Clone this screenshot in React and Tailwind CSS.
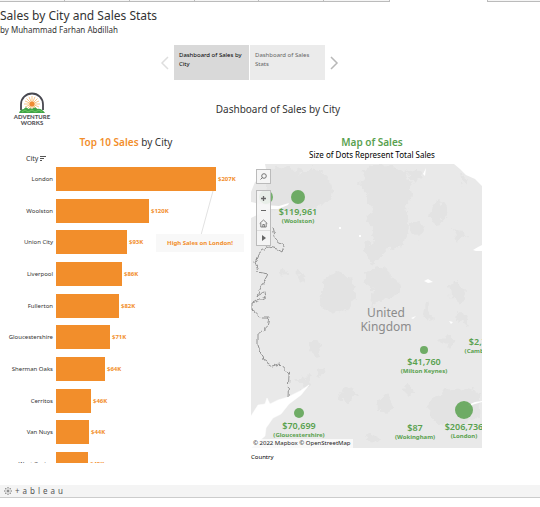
const cities = [
  { name: "London", sales: "$207K", width: 160 },
  { name: "Woolston", sales: "$120K", width: 93 },
  { name: "Union City", sales: "$93K", width: 71 },
  { name: "Liverpool", sales: "$86K", width: 66 },
  { name: "Fullerton", sales: "$82K", width: 63 },
  { name: "Gloucestershire", sales: "$71K", width: 54 },
  { name: "Sherman Oaks", sales: "$64K", width: 49 },
  { name: "Cerritos", sales: "$46K", width: 35 },
  { name: "Van Nuys", sales: "$44K", width: 33 },
  { name: "West Covina", sales: "$42K", width: 32 },
];

// x and y are the centre of the dot; labels hang below it
const pins = [
  { city: "Woolston", value: "$119,961", x: 47, y: 33, r: 7 },
  { city: "Milton Keynes", value: "$41,760", x: 173, y: 186, r: 4 },
  { city: "Cambridge", value: "$2,713", x: 232, y: 169, r: 1 },
  { city: "Gloucestershire", value: "$70,699", x: 48, y: 249, r: 5 },
  { city: "Wokingham", value: "$87", x: 164, y: 256, r: 0 },
  { city: "London", value: "$206,736", x: 213, y: 246, r: 9 },
];

function Logo() {
  return (
    <div className="flex w-[36px] flex-col items-center">
      <svg width="28" height="22" viewBox="0 0 28 22" aria-hidden="true">
        <path d="M3 18V12.500a11 11 0 0 1 22 0V18" fill="#fff" stroke="#484850" strokeWidth="1.800" />
        <g stroke="#f5b56a" strokeWidth=".8">
          <path d="M14 4v16M6 12h16M8.500 6.500l11 11M19.500 6.500l-11 11M11 4.800l6 14M17 4.800l-6 14M7 9l14 6M21 9L7 15" />
        </g>
        <circle cx="14" cy="12" r="2.500" fill="#f08a32" />
        <path d="M1 21c1-3 3-4 5-4 1-2 3-2 4 0 2-1 3-1 4 0 2-2 4-2 5 0 3-1 6 1 8 4z" fill="#3fa447" />
        <path d="M4 20l3-2 3 2 4-2 3 2 4-2 3 2" fill="none" stroke="#7bcf67" strokeWidth=".8" />
      </svg>
      <div className="text-center font-['Lato',sans-serif] text-[6px] leading-[6px] font-black text-[#55555a]">
        ADVENTURE
        <br />
        WORKS
      </div>
    </div>
  );
}

function StoryTabs() {
  return (
    <nav className="ml-[160px] flex h-[35px] items-center gap-px" aria-label="Story points">
      <button className="flex h-full w-[13px] items-center" aria-label="Previous">
        <svg width="9" height="14" viewBox="0 0 9 14" fill="none" stroke="#dedede" strokeWidth="1.500">
          <path d="M8 1L2 7l6 6" />
        </svg>
      </button>
      <button className="h-full w-[75px] bg-[#d9d9d9] px-[5px] pt-[6px] text-left text-[6px] leading-[9px] text-black">
        <span className="block h-full">Dashboard of Sales by City</span>
      </button>
      <button className="h-full w-[75px] bg-[#ebebeb] px-[5px] pt-[6px] text-left text-[6px] leading-[9px] text-[#666]">
        <span className="block h-full">Dashboard of Sales Stats</span>
      </button>
      <button className="flex h-full w-[13px] items-center justify-end" aria-label="Next">
        <svg width="9" height="14" viewBox="0 0 9 14" fill="none" stroke="#b8b8b8" strokeWidth="1.500">
          <path d="M1 1l6 6-6 6" />
        </svg>
      </button>
    </nav>
  );
}

function BarChart() {
  return (
    <section className="w-[236px] shrink-0">
      <h3 className="text-center text-[10px] leading-[15px] text-[#333]">
        <span className="font-semibold text-[#f28e2b]">Top 10 Sales</span> by City
      </h3>
      <div className="mt-[5px] flex h-[8px] items-center gap-[2px] pl-[18px] text-[7px] leading-[8px] text-[#333]">
        City
        <svg width="6" height="6" viewBox="0 0 6 6" stroke="#555" fill="none" aria-hidden="true">
          <path d="M0 .5h6M0 2.500h4M0 4.500h2" />
        </svg>
      </div>
      <div className="relative h-[300px] overflow-hidden">
        <ul className="grid h-[317px] grid-rows-10">
          {cities.map((c) => (
            <li key={c.name} className="flex items-center">
              <span className="flex w-[45px] shrink-0 justify-end text-[6px] leading-[8px] whitespace-nowrap text-[#333]">
                {c.name}
              </span>
              <span className="ml-[3px] h-[24px] shrink-0 bg-[#f28e2b]" style={{ width: c.width }} />
              <span className="ml-[2px] text-[6px] leading-[8px] font-bold text-[#f28e2b]">{c.sales}</span>
            </li>
          ))}
        </ul>
        <svg className="absolute top-[28px] left-[190px]" width="20" height="44" viewBox="0 0 20 44" aria-hidden="true">
          <path d="M15 0L3 44" stroke="#e2e2e2" />
        </svg>
        <div className="absolute top-[71px] left-[148px] flex h-[18px] w-[88px] items-center justify-center bg-[#f8f8f8] text-[6px] font-bold whitespace-nowrap text-[#f28e2b]">
          High Sales on London!
        </div>
      </div>
    </section>
  );
}

function MapArt() {
  return (
    <svg className="absolute inset-0" width="231" height="284" viewBox="0 0 231 284" aria-hidden="true">
      <defs>
        <filter id="rough" x="-5%" y="-5%" width="110%" height="110%">
          <feTurbulence type="fractalNoise" baseFrequency=".12" numOctaves="3" seed="4" />
          <feDisplacementMap in="SourceGraphic" scale="12" xChannelSelector="R" yChannelSelector="G" />
        </filter>
        <filter id="coast" x="-10%" y="-5%" width="120%" height="110%">
          <feTurbulence type="fractalNoise" baseFrequency=".2" numOctaves="2" seed="7" />
          <feDisplacementMap in="SourceGraphic" scale="5" xChannelSelector="R" yChannelSelector="G" />
        </filter>
      </defs>
      <rect width="231" height="284" fill="#e9e9e9" />
      <g fill="#e3e3e3" filter="url(#rough)">
        <path d="M16 8l12-6 24 6 10-4 14 6 6 12-4 14-14 8-8 2-12 5-14-7-14 4-2-16z" />
        <path d="M112 4l30-2 14 8 6 20-8 14 4 18-6 20-18 4-12 14-8-12 8-14-6-16 4-18-10-16z" />
        <path d="M72 117l14-8 14 6 6 14-8 18-14 3-14-6 2-14z" />
        <path d="M114 108l18-4 14 12 4 14-14 6-16 6 4-16-12-8z" />
        <path d="M180 42l10-6 6 12-4 10-10 2-4-8zM198 120l10-3 6 10-6 12-8-6zM200 65l12 2 4 6-10 4z" />
        <path d="M46 107l8 2 3 10-6 1-6-6zM30 102l5 2-2 8-4-4zM160 60l8-4 5 6-4 12-8-4z" />
        <path d="M60 180l7-4 4 9-6 9-6-5zM172 142l8-2-1 8 5 6-8 4-5-7zM207 148l10 5-2 8-9-4z" />
        <path d="M126 235l10-4 6 9-4 9-11-3zM88 226l14-3 6 8-10 6-9-3z" />
        <path d="M178 236l14-8 18-4 18 4 3 26-22 8-20-2-12-10z" />
        <path d="M112 79l12 2 4 7-10 5-8-6zM66 205l6-2 3 6-6 5zM190 176l6-6 9 6-6 9zM150 225l9-5 5 8-7 4z" />
        <path d="M115 273l10-4 4 7-8 4zM44 216l14-5 4 9-10 6zM155 8l10-4 6 8-8 8zM210 12l8 3-5 8z" />
      </g>
      <g fill="#fff">
        <path d="M0 0h14l1 5-4 9-7 4-4 10z" />
        <path d="M0 38l14 3 14 1 10-3-1 2-10 4-10 0-9 5-8 4z" />
        <path d="M203 0h28v22l-7-7-9-4-6-6z" />
        <path
          d="M0 252l7-11 7-1 2-6 3 6 8-4 10-3 12-6 9-6-8 10-12 9-8 10-8 4-7 10-1 8-7 6-7 6z"
          stroke="#fff"
          strokeWidth=".5"
        />
        <path d="M173 117l4-2 5 3-5 1zM222 86l5-3 4-2v6h-6zM160 154l5-2-3 3zM198 157l4 1-2 2zM108 71h2v2h-2zM172 10l3-6-1 8zM88 63h2v2h-2zM217 241l7-3 7-1v1l-7 2-6 2z" />
      </g>
      <path
        d="M22 64l3 12 8 6-2 6-5-3-9-2-7 4-3 4-3 7 3 10 10 2-6 11-5 11 8-4 1 6-14 5v6l10 9 7 0-2 9-9 7 0 11 5 15 9 6 8-2 9 10-1 23"
        fill="none"
        stroke="#888"
        strokeWidth=".9"
        filter="url(#coast)"
      />
    </svg>
  );
}

function MapToolbar() {
  return (
    <div className="absolute top-[5px] left-[5px] flex flex-col gap-[6px] text-[#666]">
      <button aria-label="Search" className="flex size-[15px] items-center justify-center border border-[#bbb] bg-[#f5f5f5]">
        <svg width="7" height="7" viewBox="0 0 7 7" fill="none" stroke="currentColor" strokeWidth=".9">
          <circle cx="4" cy="3" r="2.300" />
          <path d="M2.500 4.500L.5 6.500" />
        </svg>
      </button>
      <div className="flex w-[15px] flex-col border border-[#bbb] bg-[#f5f5f5]/90">
        <button aria-label="Zoom in" className="flex h-[14px] items-center justify-center">
          <svg width="7" height="7" viewBox="0 0 7 7" stroke="currentColor" strokeWidth="1.300">
            <path d="M1 3.500h5M3.500 1v5" />
          </svg>
        </button>
        <button aria-label="Zoom out" className="flex h-[11px] items-center justify-center">
          <svg width="7" height="3" viewBox="0 0 7 3" stroke="currentColor">
            <path d="M1 1.500h5" />
          </svg>
        </button>
        <button aria-label="Reset view" className="flex h-[14px] items-center justify-center">
          <svg width="9" height="9" viewBox="0 0 9 9" fill="none" stroke="currentColor" strokeWidth=".8">
            <path d="M.7 4.500L4.500 1l3.800 3.500M1.800 4v4h5.400V4M3.800 8V5.500h1.600V8" />
          </svg>
        </button>
        <button aria-label="Map tools" className="flex h-[15px] items-center justify-center border-t border-[#ddd]">
          <svg width="4" height="6" viewBox="0 0 4 6" fill="currentColor">
            <path d="M0 0l4 3-4 3z" />
          </svg>
        </button>
      </div>
    </div>
  );
}

function SalesMap() {
  return (
    <section className="ml-[7px] w-[242px] shrink-0">
      <h3 className="text-center text-[10px] leading-[15px] font-semibold text-[#59a14f]">Map of Sales</h3>
      <p className="text-center text-[8px] leading-[9px] text-black">Size of Dots Represent Total Sales</p>
      <div className="relative mt-[5px] h-[284px] w-[231px] overflow-hidden">
        <MapArt />
        <div className="absolute top-[142px] left-[95px] w-[80px] text-center text-[12px] leading-[14px] text-[#8c8c8c]">
          United Kingdom
        </div>
        <span className="absolute top-[26px] left-[8px] size-[14px] rounded-full bg-[#59a14f]/80" />
        {pins.map((p) => (
          <div
            key={p.city}
            className="absolute flex w-[100px] -translate-x-1/2 flex-col items-center text-[#59a14f]"
            style={{ left: p.x, top: p.y - p.r }}
          >
            <span className="rounded-full bg-[#59a14f]/85" style={{ width: p.r * 2, height: p.r * 2 }} />
            <span className="mt-[2px] text-[9px] leading-[11px] font-semibold">{p.value}</span>
            <span className="text-[6px] leading-[9px] font-bold">({p.city})</span>
          </div>
        ))}
        <MapToolbar />
        <div className="absolute bottom-0 left-0 bg-white/70 px-[2px] text-[6px] leading-[9px] text-[#222]">
          © 2022 Mapbox © OpenStreetMap
        </div>
      </div>
      <p className="mt-[5px] text-[6px] leading-[9px] text-black">Country</p>
    </section>
  );
}

export default function App() {
  return (
    <div className="w-full overflow-hidden bg-white font-['Noto_Sans','Open_Sans',sans-serif] text-[#333]">
      <div className="flex h-[2px] justify-between">
        <div className="grid w-[390px] grid-cols-6 divide-x divide-[#bbb] border-r border-b border-[#bbb] bg-[#f5f5f5]">
          <i /><i /><i /><i /><i /><i />
        </div>
        <div className="w-[53px] border-b border-l border-[#bbb] bg-[#f5f5f5]" />
      </div>
      <header className="h-[43px] pt-[6px]">
        <h1 className="text-[12px] leading-[16px]">Sales by City and Sales Stats</h1>
        <p className="text-[8px] leading-[12px]">by Muhammad Farhan Abdillah</p>
      </header>
      <StoryTabs />
      <main className="pl-[8px]">
        <div className="flex h-[55px] pt-[12px]">
          <div className="w-[48px] shrink-0 pl-[6px]"><Logo /></div>
          <h2 className="w-[444px] shrink-0 pt-[10px] text-center text-[10px] leading-[15px]">Dashboard of Sales by City</h2>
        </div>
        <div className="flex items-start">
          <BarChart />
          <SalesMap />
        </div>
      </main>
      <footer className="mt-[22px] flex h-[13px] items-center gap-[3px] border-b border-[#ccc] bg-[#f4f4f4] pl-[4px] text-[#555]">
        <svg width="8" height="8" viewBox="0 0 8 8" stroke="currentColor" strokeWidth=".8" aria-hidden="true">
          <path d="M4 2.500v3M2.500 4h3M4 0v1.500M4 6.500V8M0 4h1.500M6.500 4H8M1 1.800h1.500M5.500 1.800H7M1 6.200h1.500M5.500 6.200H7" />
        </svg>
        <span className="flex gap-[3px] text-[8px] leading-[10px]" aria-label="tableau">
          {"+ableau".split("").map((ch, i) => (
            <span key={i}>{ch}</span>
          ))}
        </span>
      </footer>
    </div>
  );
}
